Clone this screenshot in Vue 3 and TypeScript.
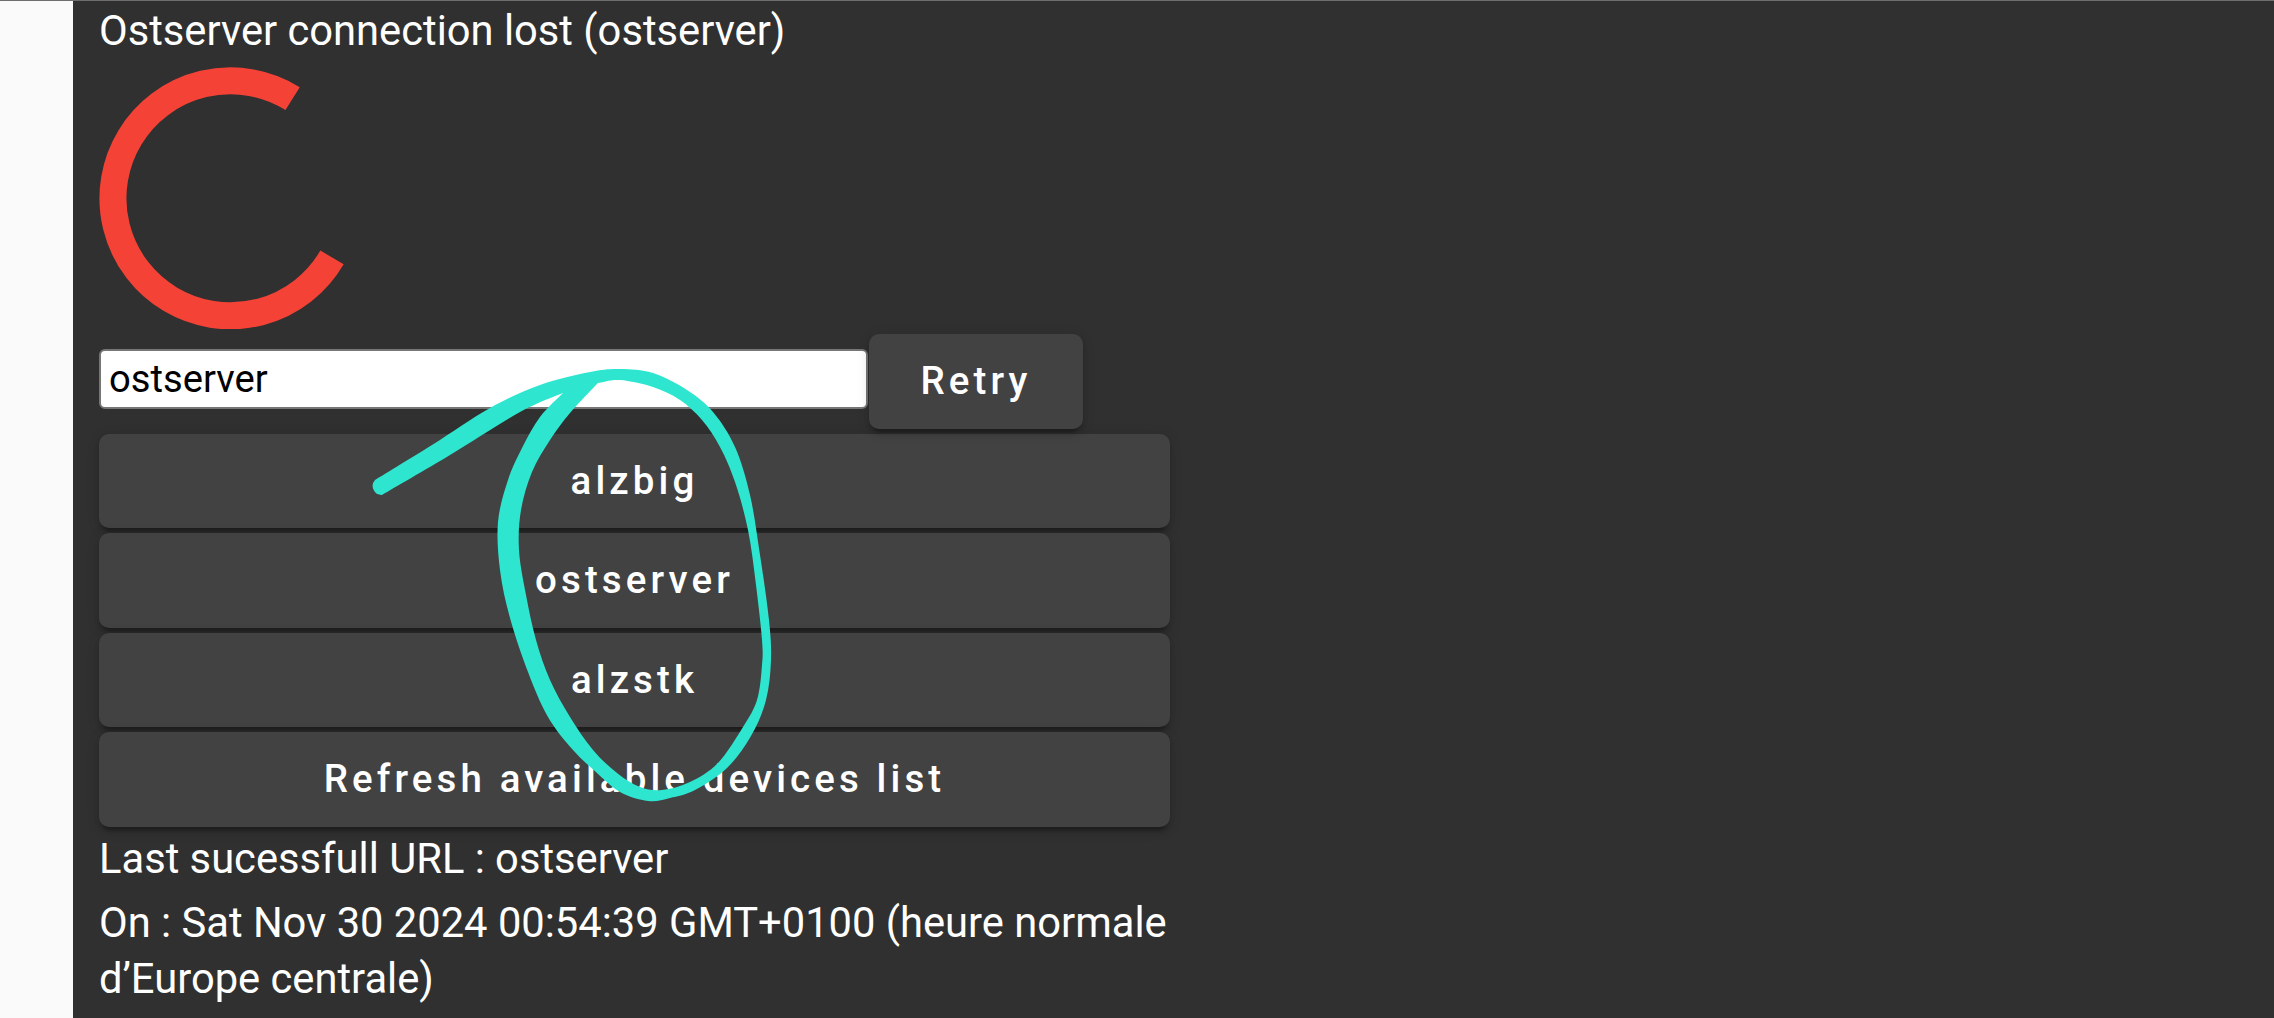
<script setup lang="ts">
type Pt = [number, number]

function spline(pts: Pt[]): string {
  let d = ''
  for (let i = 0; i < pts.length - 1; i++) {
    const p0 = pts[Math.max(i - 1, 0)]
    const p1 = pts[i]
    const p2 = pts[i + 1]
    const p3 = pts[Math.min(i + 2, pts.length - 1)]
    const c1x = p1[0] + (p2[0] - p0[0]) / 6
    const c1y = p1[1] + (p2[1] - p0[1]) / 6
    const c2x = p2[0] - (p3[0] - p1[0]) / 6
    const c2y = p2[1] - (p3[1] - p1[1]) / 6
    d += `C${c1x.toFixed(1)} ${c1y.toFixed(1)} ${c2x.toFixed(1)} ${c2y.toFixed(1)} ${p2[0]} ${p2[1]}`
  }
  return d
}

const outerTop: Pt[] = [
  [375, 480], [432, 445], [490, 408], [540, 385], [590, 372], [620, 369],
  [653, 373], [687, 390], [713, 412], [735, 447], [750, 495], [760, 555],
  [769, 620], [771, 660], [766, 700], [751, 736], [727, 768], [695, 790], [670, 798],
  [648, 801], [620, 792], [597, 773], [573, 750], [548, 717], [528, 672], [510, 618],
  [500, 570], [498, 522], [508, 480], [522, 448], [540, 417], [563, 393]
]
const stemUnder: Pt[] = [[563, 393], [520, 412], [450, 455], [382, 495]]
const hole: Pt[] = [
  [598, 383], [620, 380], [653, 387], [680, 400], [702, 420], [720, 447], [735, 482],
  [748, 530], [756, 585], [762, 640], [762, 665], [757, 700], [743, 727], [718, 763],
  [690, 782], [662, 790], [640, 787], [617, 773], [593, 750], [570, 717], [550, 680],
  [536, 640], [526, 595], [519, 550], [521, 510], [532, 472], [550, 440],
  [570, 413], [598, 383]
]

const scribble =
  `M375 480${spline(outerTop)}${spline(stemUnder)}A9 9 0 0 1 375 480Z` +
  `M598 383${spline(hole)}Z`

const devices = ['alzbig', 'ostserver', 'alzstk', 'Refresh available devices list']
</script>

<template>
  <div class="page">
    <aside class="rail"></aside>
    <main class="panel">
      <p class="title">Ostserver connection lost (ostserver)</p>
      <svg class="spinner" width="262" height="262" viewBox="0 0 262 262">
        <path d="M233 190.4A117.5 117.5 0 1 1 193.6 31.6" fill="none" stroke="#f44336" stroke-width="27" />
      </svg>
      <div class="retry-row">
        <input class="url" type="text" value="ostserver" />
        <button class="btn retry" type="button">Retry</button>
      </div>
      <button v-for="d in devices" :key="d" class="btn wide" type="button">{{ d }}</button>
      <p class="info first">Last sucessfull URL : ostserver</p>
      <p class="info">On : Sat Nov 30 2024 00:54:39 GMT+0100 (heure normale d’Europe centrale)</p>
    </main>
    <svg class="scribble" width="2274" height="1018" viewBox="0 0 2274 1018">
      <path :d="scribble" fill="#2ee6d0" fill-rule="evenodd" />
    </svg>
  </div>
</template>

<style scoped>
.page {
  position: relative;
  display: flex;
  width: 2274px;
  height: 1018px;
  overflow: hidden;
  border-top: 1px solid #6e6e6e;
  box-sizing: border-box;
  font-family: Roboto, "Liberation Sans", sans-serif;
}
.rail {
  width: 73px;
  flex: none;
  background: #fafafa;
}
.panel {
  flex: 1;
  background: #303030;
  color: #fff;
  padding: 2px 0 0 26px;
  box-sizing: border-box;
}
.title {
  margin: 0;
  font-size: 41.7px;
  line-height: 56px;
}
.spinner {
  display: block;
  margin-top: 8px;
}
.retry-row {
  display: flex;
  align-items: flex-start;
  margin-top: 5px;
}
.url {
  width: 769px;
  height: 60px;
  margin: 15px 1px 0 0;
  padding: 0 8px;
  box-sizing: border-box;
  border: 2.5px solid #767676;
  border-radius: 6px;
  background: #fff;
  color: #000;
  font: 400 38.2px Roboto, "Liberation Sans", sans-serif;
  outline: none;
}
.btn {
  display: block;
  height: 94.5px;
  padding: 0 0 1px;
  border: none;
  border-radius: 10px;
  background: #424242;
  color: #fff;
  font: 500 38.5px Roboto, "Liberation Sans", sans-serif;
  letter-spacing: 4.1px;
  text-align: center;
  box-shadow: 0 7.5px 2.5px -5px rgba(0, 0, 0, 0.2), 0 5px 5px 0 rgba(0, 0, 0, 0.14), 0 2.5px 12.5px 0 rgba(0, 0, 0, 0.12);
}
.retry {
  width: 214px;
  flex: none;
}
.wide {
  width: 1071px;
  margin-top: 5px;
}
.info {
  width: 1082px;
  margin: 8px 0 0;
  font-size: 41.7px;
  line-height: 56px;
}
.info.first {
  margin-top: 4px;
}
.scribble {
  position: absolute;
  left: 0;
  top: -1px;
  pointer-events: none;
}
</style>

<style>
html, body {
  margin: 0;
  background: #303030;
  overflow: hidden;
}
</style>
